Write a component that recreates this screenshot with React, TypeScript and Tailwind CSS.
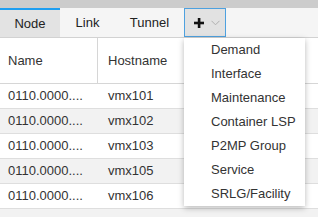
import React from 'react';

const tabs = [
  { label: 'Node', width: 'w-[60px]', active: true },
  { label: 'Link', width: 'w-[55px]', active: false },
  { label: 'Tunnel', width: 'w-[69px]', active: false },
];

const rows = ['vmx101', 'vmx102', 'vmx103', 'vmx105', 'vmx106'];

const menuItems = ['Demand', 'Interface', 'Maintenance', 'Container LSP', 'P2MP Group', 'Service', 'SRLG/Facility'];

export default function App() {
  return (
    <div
      className="relative flex h-[217px] w-[318px] flex-col overflow-hidden bg-white text-[13px] text-[#333]"
      style={{ fontFamily: '"Liberation Sans", Arial, sans-serif' }}
    >
      <div className="h-2 bg-[#cccccc]" />

      <div className="flex h-[30px] border-b border-[#d2d2d2] bg-[#f5f5f5]">
        {tabs.map((tab) => (
          <div
            key={tab.label}
            className={`${tab.width} flex items-center justify-center ${
              tab.active ? 'border-t-2 border-[#1e9ef0] bg-[#e3e3e3] text-[#222]' : 'text-[#222]'
            }`}
          >
            {tab.label}
          </div>
        ))}
        <button className="flex h-[29px] w-[42px] items-center gap-[7px] border border-[#4ea1df] bg-[#e2e2e2] pl-[9px]">
          <svg width="10" height="10" viewBox="0 0 10 10">
            <rect x="3.8" y="0" width="2.6" height="10" fill="#111" />
            <rect x="0" y="3.7" width="10" height="2.6" fill="#111" />
          </svg>
          <svg width="9" height="6" viewBox="0 0 9 6">
            <path d="M0.5 0.8 L4.5 4.8 L8.5 0.8" fill="none" stroke="#b0b0b0" strokeWidth="1" />
          </svg>
        </button>
      </div>

      <div className="flex h-[46px] border-b border-[#d6d6d6] bg-white">
        <div className="flex w-[98px] items-center border-r border-[#d6d6d6] pl-2">Name</div>
        <div className="flex items-center pl-[10px]">Hostname</div>
      </div>

      {rows.map((host, i) => (
        <div
          key={host}
          className={`flex h-[25px] shrink-0 items-center border-b border-[#dedede] ${
            i % 2 === 1 ? 'bg-[#f2f2f2]' : 'bg-white'
          }`}
        >
          <div className="w-[98px] pl-2">0110.0000....</div>
          <div className="pl-[10px]">{host}</div>
        </div>
      ))}
      <div className="flex-1 bg-[#f2f2f2]" />

      <div className="absolute left-[184px] top-[38px] flex w-[121px] flex-col bg-white shadow-[0_2px_6px_rgba(0,0,0,0.28)]">
        {menuItems.map((item) => (
          <div key={item} className="flex h-6 items-center pl-[27px] text-[#333]">
            {item}
          </div>
        ))}
      </div>
    </div>
  );
}
